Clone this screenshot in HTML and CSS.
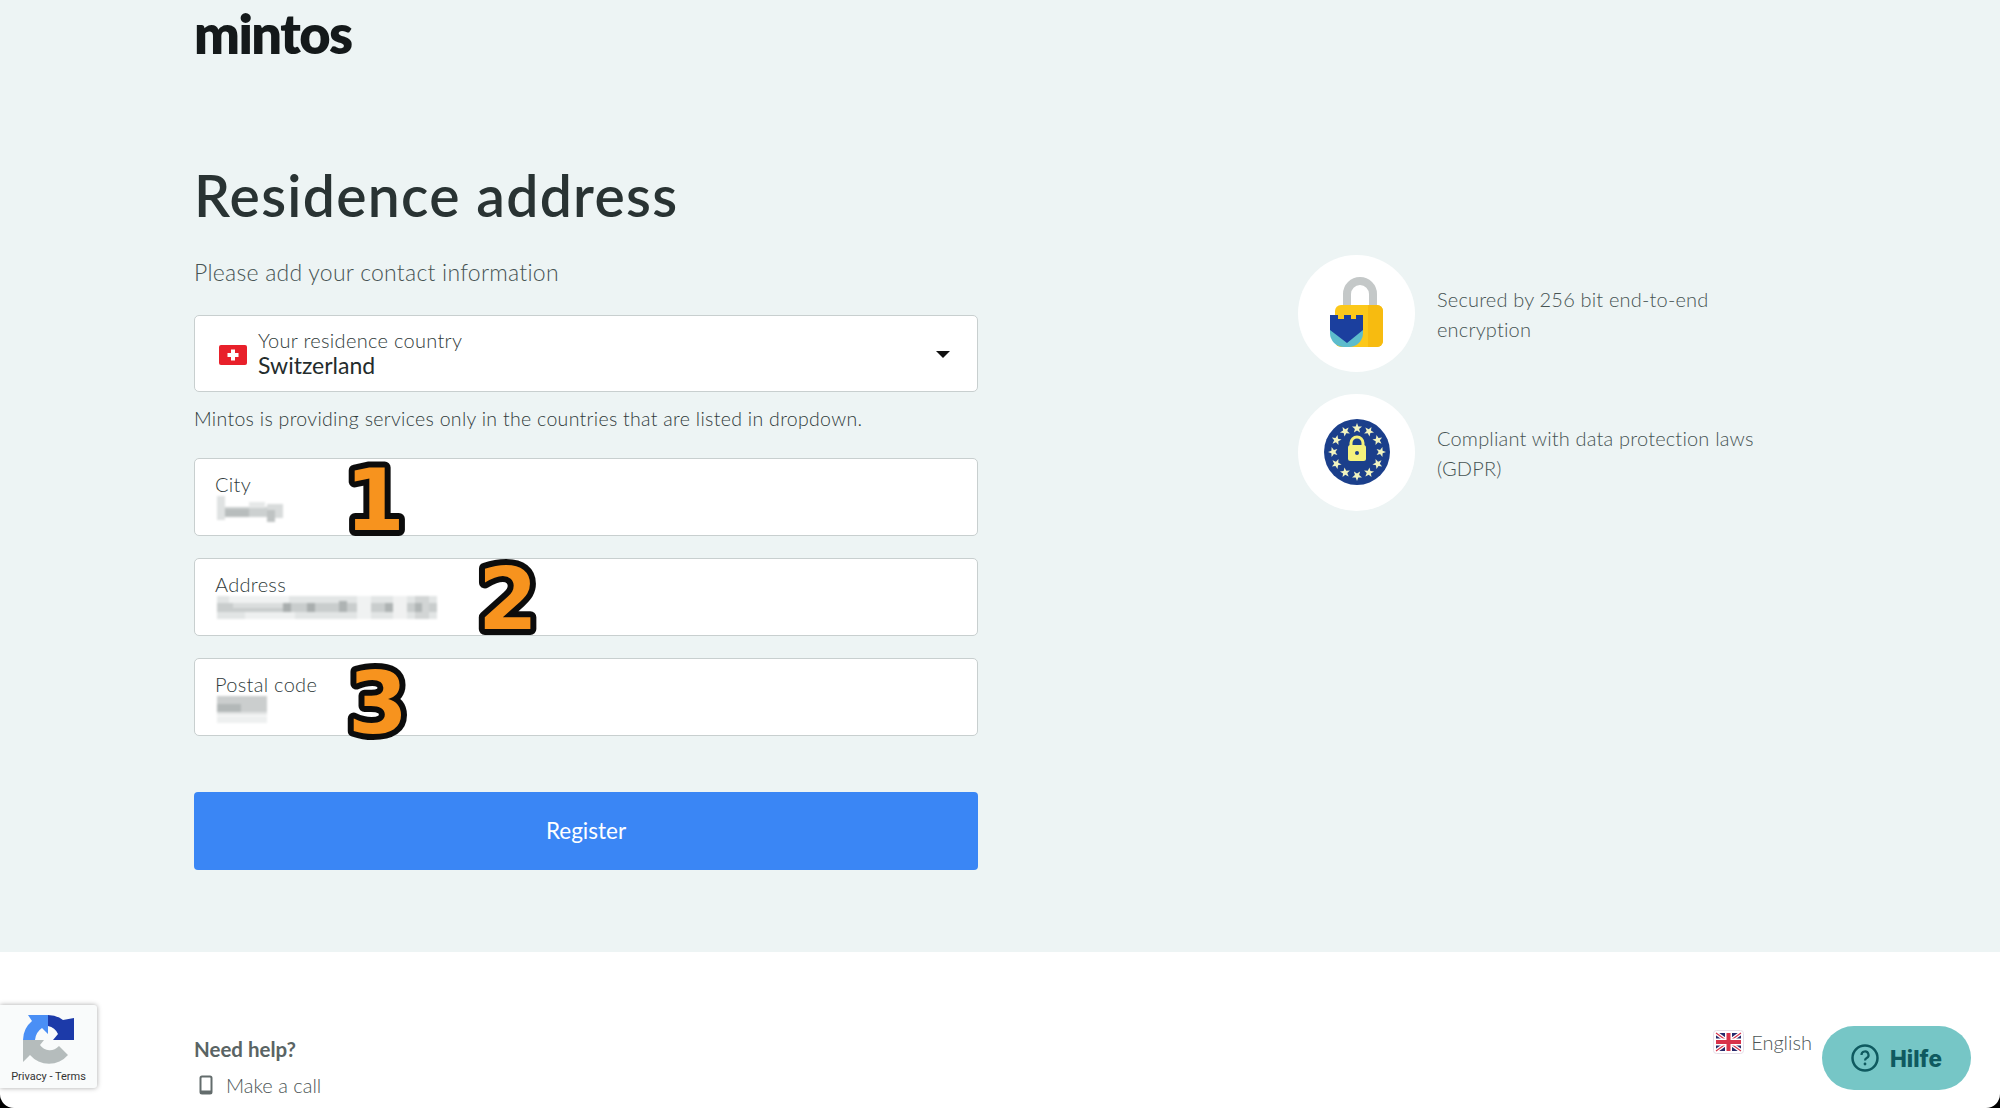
FILE: index.html
```html
<!DOCTYPE html>
<html lang="en">
<head>
  <meta charset="UTF-8" />
  <meta name="viewport" content="width=device-width, initial-scale=1" />
  <title>Residence address</title>
  <link rel="stylesheet" href="styles.css">
</head>
<body>
  <div class="page">
    <main class="main">
      <div class="logo">mintos</div>
      <div class="columns">
        <form class="form">
          <h1>Residence address</h1>
          <p class="subtitle">Please add your contact information</p>

          <div class="field field-select">
            <svg class="flag-ch" viewBox="0 0 28 20"><rect width="28" height="20" rx="2" fill="#e8202a"/><path d="M12 4.500h4V8h3.500v4H16v3.500h-4V12H8.500V8H12z" fill="#fff"/></svg>
            <div>
              <div class="field-label">Your residence country</div>
              <div class="field-value">Switzerland</div>
            </div>
            <span class="caret"></span>
          </div>
          <p class="hint">Mintos is providing services only in the countries that are listed in dropdown.</p>

          <div class="field">
            <div class="field-label">City</div>
            <svg class="blur" width="66" height="26" viewBox="0 0 66 26">
              <rect width="66" height="26" fill="#fff"/>
              <rect x="0" y="0" width="8" height="24" fill="#dfe2e2"/>
              <rect x="8" y="11" width="50" height="10" fill="#ccd0d0"/>
              <rect x="8" y="13" width="24" height="8" fill="#b8bdbd"/>
              <rect x="32" y="6" width="16" height="6" fill="#e6e8e8"/>
              <rect x="50" y="8" width="16" height="14" fill="#d8dbdb"/>
              <rect x="50" y="14" width="8" height="12" fill="#bfc3c3"/>
            </svg>
            <svg class="mark mark-1" width="80" height="90"><text x="0" y="71">1</text></svg>
          </div>
          <div class="field">
            <div class="field-label">Address</div>
            <svg class="blur" width="220" height="23" viewBox="0 0 220 23">
              <rect width="220" height="23" fill="#e2e5e5"/>
              <rect x="0" y="7" width="220" height="9" fill="#c9cdcd"/>
              <rect x="12" y="0" width="60" height="7" fill="#f0f2f2"/>
              <rect x="28" y="16" width="50" height="7" fill="#eef0f0"/>
              <rect x="16" y="7" width="50" height="5" fill="#dadddd"/>
              <rect x="66" y="7" width="8" height="9" fill="#a9aeae"/>
              <rect x="90" y="7" width="8" height="9" fill="#a9aeae"/>
              <rect x="122" y="5" width="8" height="11" fill="#aeb3b3"/>
              <rect x="140" y="0" width="14" height="23" fill="#f0f2f2"/>
              <rect x="168" y="7" width="8" height="9" fill="#aeb3b3"/>
              <rect x="176" y="0" width="14" height="23" fill="#f0f1f1"/>
              <rect x="198" y="0" width="14" height="23" fill="#d2d5d5"/>
              <rect x="198" y="7" width="7" height="9" fill="#b0b5b5"/>
            </svg>
            <svg class="mark mark-2" width="80" height="90"><text x="0" y="70">2</text></svg>
          </div>
          <div class="field">
            <div class="field-label">Postal code</div>
            <svg class="blur" width="50" height="27" viewBox="0 0 50 27">
              <rect width="50" height="16" fill="#cbcece"/>
              <rect y="8" width="24" height="8" fill="#b3b8b8"/>
              <rect y="16" width="50" height="3" fill="#e4e6e6"/>
              <rect y="20" width="50" height="7" fill="#eef0f0"/>
            </svg>
            <svg class="mark mark-3" width="80" height="90"><text x="0" y="74">3</text></svg>
          </div>

          <button type="button" class="register">Register</button>
        </form>

        <aside class="trust">
          <div class="trust-row">
            <div class="trust-icon">
              <svg width="117" height="117" viewBox="0 0 117 117">
                <path d="M49 52V39a13 13 0 0 1 26 0v13" fill="none" stroke="#c4c8c8" stroke-width="8"/>
                <rect x="37" y="50" width="48" height="42" rx="6" fill="#fcc81a"/>
                <path d="M70 50h9a6 6 0 0 1 6 6v30a6 6 0 0 1-6 6h-9z" fill="#f7bb10"/>
                <path d="M32 75v3a14 14 0 0 0 14 14h5a14 14 0 0 0 14-14V62z" fill="#5dbccc"/>
                <path d="M32 60h8v4h6v-4h7v4h5v-4h7v15L49 88 32 75z" fill="#1b3f9e"/>
              </svg>
            </div>
            <p>Secured by 256 bit end-to-end<br>encryption</p>
          </div>
          <div class="trust-row">
            <div class="trust-icon">
              <svg width="117" height="117" viewBox="0 0 117 117">
                <defs><path id="star" d="M59 29l1.300 3.400 3.700.2-2.900 2.300 1 3.500-3.100-2-3.100 2 1-3.500-2.900-2.300 3.700-.2z" fill="#f1f3c0"/></defs>
                <circle cx="59" cy="58" r="33" fill="#1b3f8b"/>
                <use href="#star"/>
                <use href="#star" transform="rotate(30 59 58)"/>
                <use href="#star" transform="rotate(60 59 58)"/>
                <use href="#star" transform="rotate(90 59 58)"/>
                <use href="#star" transform="rotate(120 59 58)"/>
                <use href="#star" transform="rotate(150 59 58)"/>
                <use href="#star" transform="rotate(180 59 58)"/>
                <use href="#star" transform="rotate(210 59 58)"/>
                <use href="#star" transform="rotate(240 59 58)"/>
                <use href="#star" transform="rotate(270 59 58)"/>
                <use href="#star" transform="rotate(300 59 58)"/>
                <use href="#star" transform="rotate(330 59 58)"/>
                <path d="M53 52v-3a6 6 0 0 1 12 0v3" fill="none" stroke="#f4f17c" stroke-width="3"/>
                <rect x="50" y="51" width="18" height="16" rx="2.500" fill="#f4f17c"/>
                <circle cx="59" cy="59" r="2" fill="#1b3f8b"/>
              </svg>
            </div>
            <p>Compliant with data protection laws<br>(GDPR)</p>
          </div>
        </aside>
      </div>
    </main>

    <footer class="footer">
      <div class="help">
        <div class="help-title">Need help?</div>
        <div class="help-call">
          <svg width="14" height="20" viewBox="0 0 14 20"><rect x="1.500" y="1.500" width="11" height="17" rx="1.500" fill="none" stroke="#636c6c" stroke-width="2"/><rect x="1" y="15.500" width="12" height="3.500" fill="#636c6c"/></svg>
          <span>Make a call</span>
        </div>
      </div>
      <div class="lang">
        <svg width="31" height="24" viewBox="0 0 31 24">
          <rect x="0.500" y="0.500" width="30" height="23" rx="3" fill="#fff" stroke="#e6dfe8"/>
          <rect x="3" y="3" width="25" height="18" fill="#27296b"/>
          <path d="M3 3l25 18M28 3L3 21" stroke="#fff" stroke-width="4"/>
          <path d="M3 3l25 18M28 3L3 21" stroke="#d8324a" stroke-width="1.200"/>
          <path d="M15.500 3v18M3 12h25" stroke="#fff" stroke-width="7"/>
          <path d="M15.500 3v18M3 12h25" stroke="#d8324a" stroke-width="4"/>
        </svg>
        <span>English</span>
      </div>
    </footer>

    <div class="recaptcha">
      <svg width="52" height="52" viewBox="0 0 52 52">
        <path d="M0 26A25 25 0 0 1 9 7L5 1h20v19l-6-6a16 16 0 0 0-7 12z" fill="#4a8ff5"/>
        <path d="M25 1a25 25 0 0 1 15 5l11-2v22H30l5-6a14 14 0 0 0-10-8z" fill="#1c3aa9"/>
        <path d="M0 26h21l-4 5a12 12 0 0 0 19 1l9 9A25 25 0 0 1 7 41l-7 7z" fill="#b5bcbc"/>
      </svg>
      <div class="recaptcha-links">Privacy - Terms</div>
    </div>

    <button type="button" class="hilfe">
      <svg width="28" height="28" viewBox="0 0 28 28"><circle cx="14" cy="14" r="12.500" fill="none" stroke="#0f5a60" stroke-width="2.500"/><path d="M10.500 11a3.500 3.500 0 1 1 5.200 3c-1.200.7-1.700 1.300-1.700 2.500" fill="none" stroke="#0f5a60" stroke-width="2.200"/><circle cx="14" cy="20" r="1.400" fill="#0f5a60"/></svg>
      <span>Hilfe</span>
    </button>
  </div>
</body>
</html>
```

FILE: styles.css
```css
html, body {
  margin: 0;
  height: 100%;
  background: #000;
}
body {
  font-family: Lato, Arial, sans-serif;
  overflow: hidden;
}
.page {
  position: relative;
  height: 1108px;
  background: #fff;
  border-radius: 0 0 14px 14px;
  overflow: hidden;
  display: flex;
  flex-direction: column;
}
.main {
  height: 952px;
  box-sizing: border-box;
  background: #edf4f4;
  padding: 0 0 0 194px;
}
.logo {
  height: 62px;
  font-size: 54px;
  line-height: 68px;
  font-weight: 800;
  letter-spacing: -1.500px;
  color: #14191a;
}
.columns {
  display: flex;
}
.form {
  width: 784px;
}
h1 {
  margin: 98px 0 0;
  font-size: 57px;
  line-height: 70px;
  font-weight: 600;
  letter-spacing: 1.300px;
  color: #293333;
}
.subtitle {
  margin: 27px 0 0;
  font-size: 23px;
  line-height: 30px;
  font-weight: 300;
  letter-spacing: 0.250px;
  color: #465353;
}
.field {
  position: relative;
  box-sizing: border-box;
  height: 78px;
  margin-bottom: 22px;
  padding: 14px 20px 0;
  background: #fff;
  border: 1.500px solid #c8cfcf;
  border-radius: 5px;
}
.field-select {
  display: flex;
  align-items: center;
  gap: 11px;
  height: 77px;
  margin: 28px 0 0;
  padding: 0 24px;
}
.flag-ch {
  width: 28px;
  height: 20px;
  margin-top: 2px;
}
.caret {
  position: absolute;
  right: 27px;
  top: 35px;
  border-left: 7px solid transparent;
  border-right: 7px solid transparent;
  border-top: 7px solid #111;
}
.field-label {
  font-size: 20px;
  line-height: 23px;
  font-weight: 300;
  letter-spacing: 0.300px;
  color: #303b3b;
}
.field-value {
  font-size: 23px;
  line-height: 26px;
  color: #242c2c;
}
.hint {
  margin: 14px 0 26px;
  font-size: 19.500px;
  line-height: 26px;
  font-weight: 300;
  letter-spacing: 0.310px;
  color: #303b3b;
}
.blur {
  display: block;
  margin: 0 0 0 2px;
  filter: blur(0.8px);
}
.mark {
  position: absolute;
  top: 0;
  overflow: visible;
  font-family: "DejaVu Sans", sans-serif;
  font-weight: 700;
  font-size: 86px;
  fill: #f7931e;
  stroke: #0c0c0c;
  stroke-width: 12px;
  stroke-linejoin: round;
  paint-order: stroke fill;
}
.mark-1 {
  left: 150px;
}
.mark-2 {
  left: 283px;
}
.mark-3 {
  left: 153px;
}
.register {
  display: block;
  width: 100%;
  height: 78px;
  margin-top: 56px;
  padding-bottom: 3px;
  background: #3a86f5;
  border: none;
  border-radius: 4px;
  color: #fff;
  font-family: inherit;
  font-size: 22.500px;
}
.trust {
  margin: 193px 0 0 320px;
  display: flex;
  flex-direction: column;
  gap: 22px;
}
.trust-row {
  display: flex;
  align-items: center;
  gap: 22px;
}
.trust-row p {
  margin: 0;
  font-size: 20px;
  line-height: 30px;
  font-weight: 300;
  letter-spacing: 0.180px;
  color: #465353;
}
.trust-icon {
  width: 117px;
  height: 117px;
  border-radius: 50%;
  background: #fff;
}
.footer {
  flex: 1;
  display: flex;
  justify-content: space-between;
  padding: 84px 188px 0 194px;
}
.help-title {
  font-size: 20.500px;
  line-height: 26px;
  font-weight: 700;
  color: #5a6464;
}
.help-call {
  display: flex;
  align-items: center;
  gap: 13px;
  margin: 11px 0 0 5px;
  font-size: 20px;
  font-weight: 300;
  color: #4c5656;
}
.lang {
  display: flex;
  align-items: center;
  gap: 7px;
  height: 24px;
  margin-top: -6px;
  font-size: 20px;
  font-weight: 300;
  color: #4c5656;
}
.recaptcha {
  position: absolute;
  left: 0;
  top: 1005px;
  width: 97px;
  height: 83px;
  box-sizing: border-box;
  padding-top: 9px;
  background: #f9fbfb;
  border-radius: 0 3px 3px 0;
  box-shadow: 0 0 5px rgba(0,0,0,0.35);
  text-align: center;
}
.recaptcha svg {
  display: block;
  margin: 0 0 5px 23px;
}
.recaptcha-links {
  font-family: Roboto, sans-serif;
  font-size: 11px;
  line-height: 12px;
  color: #333;
}
.hilfe {
  position: absolute;
  left: 1822px;
  top: 1026px;
  width: 149px;
  height: 64px;
  display: flex;
  align-items: center;
  justify-content: center;
  gap: 11px;
  background: #76c6c6;
  border: none;
  border-radius: 32px;
  color: #0f5a60;
  font-family: Inter, sans-serif;
  font-size: 22.500px;
  font-weight: 800;
}
```
